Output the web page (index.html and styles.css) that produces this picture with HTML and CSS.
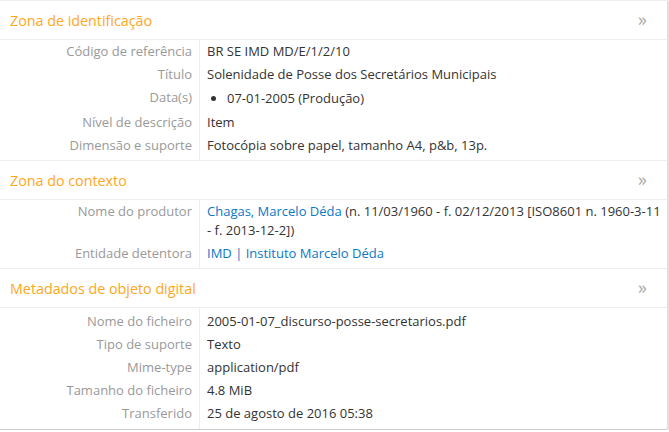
FILE: index.html
```html
<!DOCTYPE html>
<html lang="pt">
<head>
<meta charset="utf-8">
<title>Zona de identificação</title>
<link rel="stylesheet" href="styles.css">
</head>
<body>
<div class="card">
  <section class="zone">
    <header class="zone-head"><h2>Zona de identificação</h2><span class="chev">»</span></header>
    <div class="rows">
      <div class="row"><div class="lbl">Código de referência</div><div class="val">BR SE IMD MD/E/1/2/10</div></div>
      <div class="row"><div class="lbl">Título</div><div class="val">Solenidade de Posse dos Secretários Municipais</div></div>
      <div class="row"><div class="lbl">Data(s)</div><div class="val"><ul class="dates"><li>07-01-2005 (Produção)</li></ul></div></div>
      <div class="row"><div class="lbl">Nível de descrição</div><div class="val">Item</div></div>
      <div class="row"><div class="lbl">Dimensão e suporte</div><div class="val">Fotocópia sobre papel, tamanho A4, p&amp;b, 13p.</div></div>
    </div>
  </section>
  <section class="zone">
    <header class="zone-head"><h2>Zona do contexto</h2><span class="chev">»</span></header>
    <div class="rows">
      <div class="row"><div class="lbl">Nome do produtor</div><div class="val"><a href="#">Chagas, Marcelo Déda</a> (n. 11/03/1960 - f. 02/12/2013 [ISO8601 n. 1960-3-11 - f. 2013-12-2])</div></div>
      <div class="row"><div class="lbl">Entidade detentora</div><div class="val"><a href="#">IMD | Instituto Marcelo Déda</a></div></div>
    </div>
  </section>
  <section class="zone">
    <header class="zone-head"><h2>Metadados de objeto digital</h2><span class="chev">»</span></header>
    <div class="rows">
      <div class="row"><div class="lbl">Nome do ficheiro</div><div class="val">2005-01-07_discurso-posse-secretarios.pdf</div></div>
      <div class="row"><div class="lbl">Tipo de suporte</div><div class="val">Texto</div></div>
      <div class="row"><div class="lbl">Mime-type</div><div class="val">application/pdf</div></div>
      <div class="row"><div class="lbl">Tamanho do ficheiro</div><div class="val">4.8 MiB</div></div>
      <div class="row"><div class="lbl">Transferido</div><div class="val">25 de agosto de 2016 05:38</div></div>
    </div>
  </section>
</div>
</body>
</html>
```
FILE: styles.css
```css
html, body {
  margin: 0;
  padding: 0;
  background: #fff;
}
body {
  font-family: "Open Sans", "DejaVu Sans", sans-serif;
  font-size: 13px;
  color: #333;
}
.card {
  width: 667px;
  border-top: 1px solid #eee;
  border-right: 1px solid #ddd;
  border-bottom: 1px solid #ccc;
  box-shadow: 1px 1px 2px rgba(0,0,0,0.15);
  border-bottom-right-radius: 3px;
}
.zone + .zone {
  border-top: 1px solid #eee;
}
.zone-head {
  display: flex;
  align-items: center;
  justify-content: space-between;
  height: 38px;
  padding: 0 20px 0 10px;
  border-bottom: 1px solid #eee;
}
.zone-head h2 {
  margin: 0;
  font-size: 14.3px;
  font-weight: normal;
  color: #ffa722;
}
.chev {
  font-size: 18px;
  color: #aaa;
  line-height: 1;
  margin-top: -3px;
}
.rows > .row:last-child > div {
  padding-bottom: 5px;
}
.zone:last-child .rows > .row:first-child > div {
  padding-top: 4px;
}
.zone:last-child .rows > .row:last-child > div {
  padding-bottom: 6px;
}
.row {
  display: grid;
  grid-template-columns: 200px 1fr;
}
.lbl {
  text-align: right;
  color: #999;
  padding: 2px 7px 2px 0;
  line-height: 19px;
  border-right: 1px solid #eee;
}
.val {
  padding: 2px 5px 2px 7px;
  line-height: 19px;
}
a {
  color: #0a79c6;
  text-decoration: none;
}
.dates {
  margin: 0;
  padding: 0 0 0 20px;
  list-style: disc;
  line-height: 21px;
}
```
